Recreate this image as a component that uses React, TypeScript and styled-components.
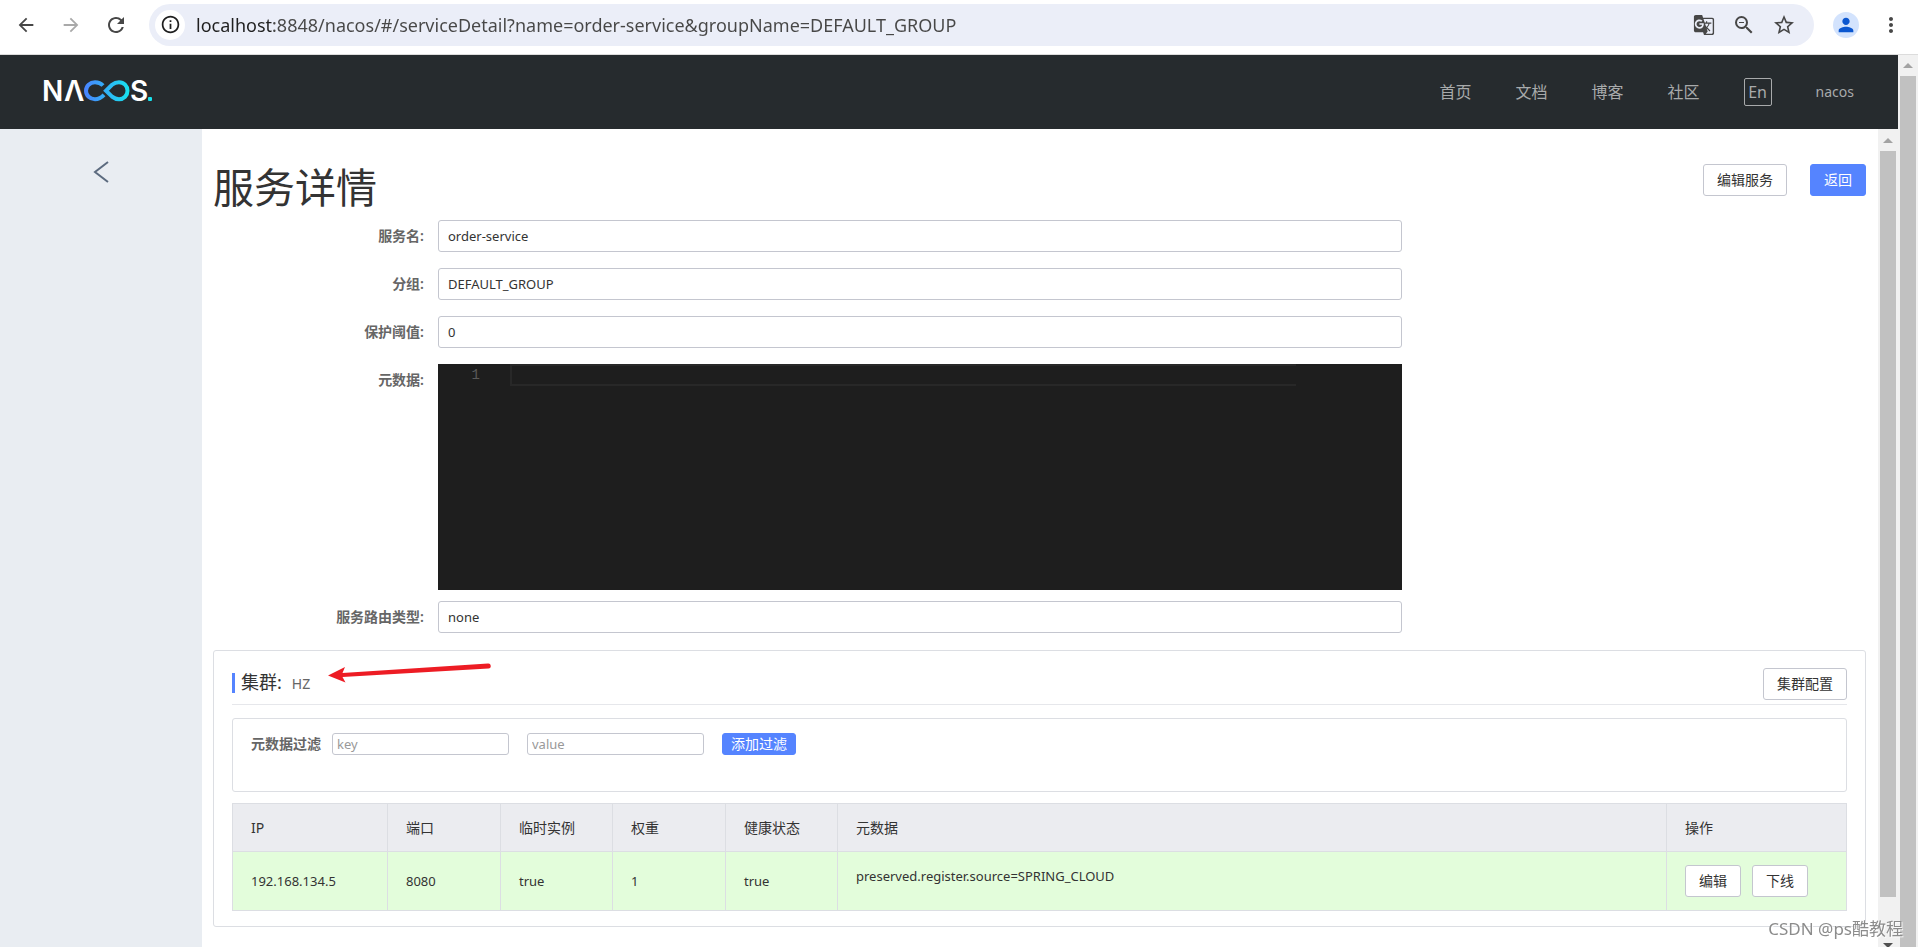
import React from "react";
import styled, { createGlobalStyle } from "styled-components";
import {
  MdArrowBack,
  MdArrowForward,
  MdGTranslate,
  MdInfoOutline,
  MdMoreVert,
  MdPerson,
  MdRefresh,
  MdStarBorder,
  MdZoomOut,
} from "react-icons/md";

const GlobalStyle = createGlobalStyle`
  *, *::before, *::after { box-sizing: border-box; }
  body {
    margin: 0;
    background: #fff;
    color: #333;
    font: 13px/18px "Noto Sans", "Noto Sans CJK SC", sans-serif;
  }
  button, input { font: inherit; color: inherit; margin: 0; }
  button { cursor: pointer; }
`;

const Page = styled.div`
  display: flex;
  flex-direction: column;
  height: 100vh;
  overflow: hidden;
`;

/* Browser toolbar */

const Toolbar = styled.div`
  display: flex;
  flex: none;
  align-items: center;
  height: 55px;
  padding: 0 15px 5px 14px;
  border-bottom: 1px solid #dcdcdc;
  color: #474747;
`;

const ToolButton = styled.button<{ $gap?: number; $faded?: boolean }>`
  display: flex;
  flex: none;
  align-items: center;
  justify-content: center;
  width: 24px;
  height: 24px;
  margin-right: ${(p) => p.$gap ?? 0}px;
  padding: 0;
  border: 0;
  background: none;
  color: ${(p) => (p.$faded ? "#a9a9a9" : "#474747")};
`;

const AddressBar = styled.div`
  display: flex;
  flex: 1;
  align-items: center;
  height: 42px;
  margin-right: 19px;
  padding: 0 18px 0 6px;
  border-radius: 21px;
  background: #ebeef8;
`;

const SiteInfo = styled.button`
  display: flex;
  align-items: center;
  justify-content: center;
  width: 30px;
  height: 30px;
  padding: 0;
  border: 0;
  border-radius: 50%;
  background: #fff;
  color: #1f1f1f;
`;

const AddressInput = styled.input`
  flex: 1;
  min-width: 0;
  padding: 0 11px;
  border: 0;
  outline: 0;
  background: linear-gradient(to right, #1f1f1f 89px, #474747 89px);
  background-clip: text;
  color: transparent;
  font-size: 18px;
  line-height: 24px;
`;

const Avatar = styled.button`
  display: flex;
  align-items: center;
  justify-content: center;
  width: 26px;
  height: 26px;
  margin-right: 20px;
  padding: 0;
  border: 0;
  border-radius: 50%;
  background: #d3e3fd;
  color: #0b57d0;
`;

/* Viewport and scrollbars */

const Viewport = styled.div`
  display: flex;
  flex: 1;
  min-height: 0;
`;

const Site = styled.div`
  display: flex;
  flex: 1;
  flex-direction: column;
  min-width: 0;
`;

const Track = styled.div`
  display: flex;
  flex: none;
  flex-direction: column;
  width: 20px;
  background: #f1f1f1;
`;

const TrackEnd = styled.div<{ $size: number }>`
  display: flex;
  flex: none;
  align-items: center;
  justify-content: center;
  height: ${(p) => p.$size}px;
  overflow: hidden;
`;

const Thumb = styled.div`
  flex: 1;
  margin: 0 2px;
  background: #c1c1c1;
`;

/* Site header */

const Header = styled.header`
  display: flex;
  flex: none;
  align-items: center;
  justify-content: space-between;
  height: 74px;
  padding: 0 44px 0 40px;
  background: #262b2e;
`;

const Nav = styled.nav`
  display: flex;
  align-items: center;
  gap: 44px;
  color: #a8aaab;
`;

const NavLink = styled.a<{ $small?: boolean }>`
  color: inherit;
  font-size: ${(p) => (p.$small ? 14 : 16)}px;
  line-height: 24px;
  text-decoration: none;
`;

const LanguageButton = styled.button`
  width: 28px;
  height: 28px;
  padding: 0;
  border: 1px solid currentColor;
  border-radius: 2px;
  background: none;
  font-size: 16px;
  line-height: 20px;
`;

const Body = styled.div`
  display: flex;
  flex: 1;
  min-height: 0;
`;

const Sidebar = styled.aside`
  flex: none;
  width: 202px;
  padding-top: 32px;
  background: #e9edf2;
  text-align: center;
`;

const CollapseButton = styled.button`
  padding: 0;
  border: 0;
  background: none;
`;

const Content = styled.main`
  flex: 1;
  min-width: 0;
  padding: 35px 12px 0 11px;
  overflow: hidden;
`;

const TitleRow = styled.div`
  display: flex;
  justify-content: space-between;
  height: 56px;
`;

const Title = styled.h1`
  margin: 0;
  font-size: 41px;
  font-weight: 400;
  line-height: 46px;
`;

const Actions = styled.div<{ $gap: number }>`
  display: flex;
  gap: ${(p) => p.$gap}px;
`;

const Button = styled.button<{ $primary?: boolean; $small?: boolean }>`
  height: ${(p) => (p.$small ? 22 : 32)}px;
  padding: 0 ${(p) => (p.$small ? 8 : 13)}px;
  border: 1px solid ${(p) => (p.$primary ? "#5584ff" : "#c4c6cf")};
  border-radius: 3px;
  background: ${(p) => (p.$primary ? "#5584ff" : "#fff")};
  color: ${(p) => (p.$primary ? "#fff" : "#333")};
  font-size: 14px;
  line-height: 20px;
  white-space: nowrap;
`;

/* Service form */

const Form = styled.form`
  display: flex;
  flex-direction: column;
  gap: 16px;
  margin-bottom: 17px;
`;

const Field = styled.div<{ $tight?: boolean }>`
  display: grid;
  grid-template-columns: 211px minmax(0, 15fr) minmax(0, 7fr);
  column-gap: 14px;
  margin-top: ${(p) => (p.$tight ? -5 : 0)}px;
`;

const Label = styled.label`
  color: #666;
  font-size: 14px;
  font-weight: 600;
  line-height: 32px;
  text-align: right;
`;

const TextInput = styled.input<{ $small?: boolean }>`
  width: ${(p) => (p.$small ? "177px" : "100%")};
  height: ${(p) => (p.$small ? 22 : 32)}px;
  padding: 0 ${(p) => (p.$small ? 4 : 9)}px;
  border: 1px solid #c4c6cf;
  border-radius: 3px;
  outline: 0;
  background: #fff;

  &::placeholder { color: #999; opacity: 1; }
`;

const Editor = styled.div`
  display: flex;
  height: 226px;
  background: #1e1e1e;
`;

const LineNumber = styled.span`
  width: 72px;
  padding-right: 30px;
  color: #5a5a5a;
  font: 14px/22px "Liberation Mono", monospace;
  text-align: right;
`;

const CodeLine = styled.input`
  flex: 1;
  min-width: 0;
  height: 22px;
  margin-right: 106px;
  padding: 0;
  border: 2px solid #282828;
  border-right: 0;
  outline: 0;
  background: none;
  color: #d4d4d4;
`;

/* Cluster card */

const Card = styled.section`
  padding: 17px 18px 15px;
  border: 1px solid #dcdee3;
  border-radius: 3px;
`;

const CardHead = styled.div`
  display: flex;
  align-items: flex-start;
  justify-content: space-between;
  height: 37px;
  margin-bottom: 13px;
  border-bottom: 1px solid #e6e7eb;
`;

const CardTitleWrap = styled.div`
  position: relative;
`;

const CardTitle = styled.h2`
  display: flex;
  align-items: baseline;
  margin: 5px 0 0;
  padding-left: 6px;
  border-left: 3px solid #5584ff;
  font-size: 18px;
  font-weight: 400;
  line-height: 18px;
`;

const ClusterName = styled.span`
  margin-left: 10px;
  color: #666;
  font-size: 14px;
`;

const PointerArrow = styled.svg`
  position: absolute;
  top: -6px;
  left: 95px;
`;

const Filter = styled.form`
  display: flex;
  align-items: flex-start;
  gap: 18px;
  height: 74px;
  margin-bottom: 11px;
  padding: 14px 18px;
  border: 1px solid #dcdee3;
  border-radius: 3px;
`;

const FilterLabel = styled.label`
  display: flex;
  gap: 11px;
  color: #666;
  font-size: 14px;
  font-weight: 600;
  line-height: 22px;

  input { font-size: 13px; font-weight: 400; }
`;

const Table = styled.table`
  width: 100%;
  border-collapse: collapse;
  table-layout: fixed;

  th, td {
    padding: 0 18px;
    border: 1px solid #dcdee3;
    text-align: left;
  }
  th {
    height: 48px;
    background: #ebecf0;
    font-size: 14px;
    font-weight: 400;
  }
  td {
    height: 59px;
    background: #e3fddb;
  }
`;

const Metadata = styled.p`
  margin: 0 0 10px;
`;

const Watermark = styled.div`
  position: fixed;
  right: 15px;
  bottom: 6px;
  color: #8c8c8c;
  font-size: 17px;
  line-height: 24px;
  text-shadow: 1px 1px 1px #fff;
`;

const Logo = () => (
  <svg width="120" height="48" viewBox="-4 -12 120 48" role="img" aria-label="Nacos">
    <defs>
      <linearGradient id="loop" gradientUnits="userSpaceOnUse" x1="40" y1="0" x2="85" y2="0">
        <stop offset="0" stopColor="#4a82ff" />
        <stop offset="1" stopColor="#17e3ee" />
      </linearGradient>
    </defs>
    <g fill="#fff" fontFamily="Inter, sans-serif" fontSize="28" fontWeight="600">
      <text x="-2" y="21">N</text>
      <text x="20" y="21">Λ</text>
      <text x="86" y="21">S</text>
    </g>
    <g fill="none" stroke="url(#loop)" strokeWidth="4">
      <path d="M59 5.500C57 3.300 54 2.200 51 2.200C46 2.200 42 6 42 10.700C42 15.500 46 19.200 51 19.200C54.500 19.200 57 18 60 14.800" />
      <path d="M62 10.700L68 4.800C70.500 2.800 72.500 2.200 75 2.200C79.800 2.200 83.500 6 83.500 10.700C83.500 15.500 79.800 19.200 75 19.200C72.500 19.200 70.500 18.600 68 16.600Z" />
    </g>
    <rect x="104" y="17" width="4" height="4" rx="1" fill="#17e3ee" />
  </svg>
);

const Triangle = ({ down, color }: { down?: boolean; color: string }) => (
  <svg width="10" height="5" viewBox="0 0 10 5">
    <path d={down ? "M0 0h10L5 5z" : "M0 5h10L5 0z"} fill={color} />
  </svg>
);

const details = [
  { id: "name", label: "服务名:", value: "order-service" },
  { id: "group", label: "分组:", value: "DEFAULT_GROUP" },
  { id: "threshold", label: "保护阈值:", value: "0" },
];

const columns = [
  { name: "IP", width: "155px" },
  { name: "端口", width: "113px" },
  { name: "临时实例", width: "112px" },
  { name: "权重", width: "113px" },
  { name: "健康状态", width: "112px" },
  { name: "元数据" },
  { name: "操作", width: "180px" },
];

export default function App() {
  return (
    <Page>
      <GlobalStyle />
      <Toolbar>
        <ToolButton $gap={21} aria-label="Back"><MdArrowBack size={22} /></ToolButton>
        <ToolButton $gap={21} $faded aria-label="Forward"><MdArrowForward size={22} /></ToolButton>
        <ToolButton $gap={21} aria-label="Reload"><MdRefresh size={24} /></ToolButton>
        <AddressBar>
          <SiteInfo aria-label="Site information"><MdInfoOutline size={21} /></SiteInfo>
          <AddressInput
            aria-label="Address"
            defaultValue="localhost:8848/nacos/#/serviceDetail?name=order-service&groupName=DEFAULT_GROUP"
          />
          <ToolButton $gap={16} aria-label="Translate"><MdGTranslate size={22} /></ToolButton>
          <ToolButton $gap={16} aria-label="Zoom"><MdZoomOut size={24} /></ToolButton>
          <ToolButton aria-label="Bookmark"><MdStarBorder size={24} /></ToolButton>
        </AddressBar>
        <Avatar aria-label="Profile"><MdPerson size={22} /></Avatar>
        <ToolButton aria-label="Menu"><MdMoreVert size={26} /></ToolButton>
      </Toolbar>

      <Viewport>
        <Site>
          <Header>
            <Logo />
            <Nav>
              <NavLink href="#home">首页</NavLink>
              <NavLink href="#docs">文档</NavLink>
              <NavLink href="#blog">博客</NavLink>
              <NavLink href="#community">社区</NavLink>
              <LanguageButton>En</LanguageButton>
              <NavLink href="#user" $small>nacos</NavLink>
            </Nav>
          </Header>

          <Body>
            <Sidebar>
              <CollapseButton aria-label="Back">
                <svg width="16" height="22" viewBox="0 0 16 22" fill="none" stroke="#5c6b7f" strokeWidth="2">
                  <path d="M15 1 2 11l13 10" />
                </svg>
              </CollapseButton>
            </Sidebar>

            <Content>
              <TitleRow>
                <Title>服务详情</Title>
                <Actions $gap={23}>
                  <Button>编辑服务</Button>
                  <Button $primary>返回</Button>
                </Actions>
              </TitleRow>

              <Form>
                {details.map((d) => (
                  <Field key={d.id}>
                    <Label htmlFor={d.id}>{d.label}</Label>
                    <TextInput id={d.id} defaultValue={d.value} />
                  </Field>
                ))}
                <Field>
                  <Label htmlFor="metadata">元数据:</Label>
                  <Editor>
                    <LineNumber>1</LineNumber>
                    <CodeLine id="metadata" />
                  </Editor>
                </Field>
                <Field $tight>
                  <Label htmlFor="selector">服务路由类型:</Label>
                  <TextInput id="selector" defaultValue="none" />
                </Field>
              </Form>

              <Card>
                <CardHead>
                  <CardTitleWrap>
                    <CardTitle>
                      集群:<ClusterName>HZ</ClusterName>
                    </CardTitle>
                    <PointerArrow width="168" height="24" viewBox="0 0 168 24" fill="#ed1c24" aria-hidden="true">
                      <path d="M1 13.500L18 5L15.500 11L161 1.500A2.500 2.500 0 0 1 161.500 6.500L15.500 15L18.500 20.500Z" />
                    </PointerArrow>
                  </CardTitleWrap>
                  <Button>集群配置</Button>
                </CardHead>

                <Filter>
                  <FilterLabel>
                    元数据过滤
                    <TextInput $small placeholder="key" />
                  </FilterLabel>
                  <TextInput $small placeholder="value" aria-label="value" />
                  <Button type="button" $primary $small>添加过滤</Button>
                </Filter>

                <Table>
                  <colgroup>
                    {columns.map((c) => <col key={c.name} width={c.width} />)}
                  </colgroup>
                  <thead>
                    <tr>{columns.map((c) => <th key={c.name}>{c.name}</th>)}</tr>
                  </thead>
                  <tbody>
                    <tr>
                      <td>192.168.134.5</td>
                      <td>8080</td>
                      <td>true</td>
                      <td>1</td>
                      <td>true</td>
                      <td><Metadata>preserved.register.source=SPRING_CLOUD</Metadata></td>
                      <td>
                        <Actions $gap={11}>
                          <Button>编辑</Button>
                          <Button>下线</Button>
                        </Actions>
                      </td>
                    </tr>
                  </tbody>
                </Table>
              </Card>
            </Content>

            <Track>
              <TrackEnd $size={22}><Triangle color="#a3a3a3" /></TrackEnd>
              <Thumb />
              <TrackEnd $size={46} />
              <TrackEnd $size={4}><Triangle down color="#505050" /></TrackEnd>
            </Track>
          </Body>
        </Site>

        <Track>
          <TrackEnd $size={21}><Triangle color="#a3a3a3" /></TrackEnd>
          <Thumb />
        </Track>
      </Viewport>
      <Watermark>CSDN @ps酷教程</Watermark>
    </Page>
  );
}
